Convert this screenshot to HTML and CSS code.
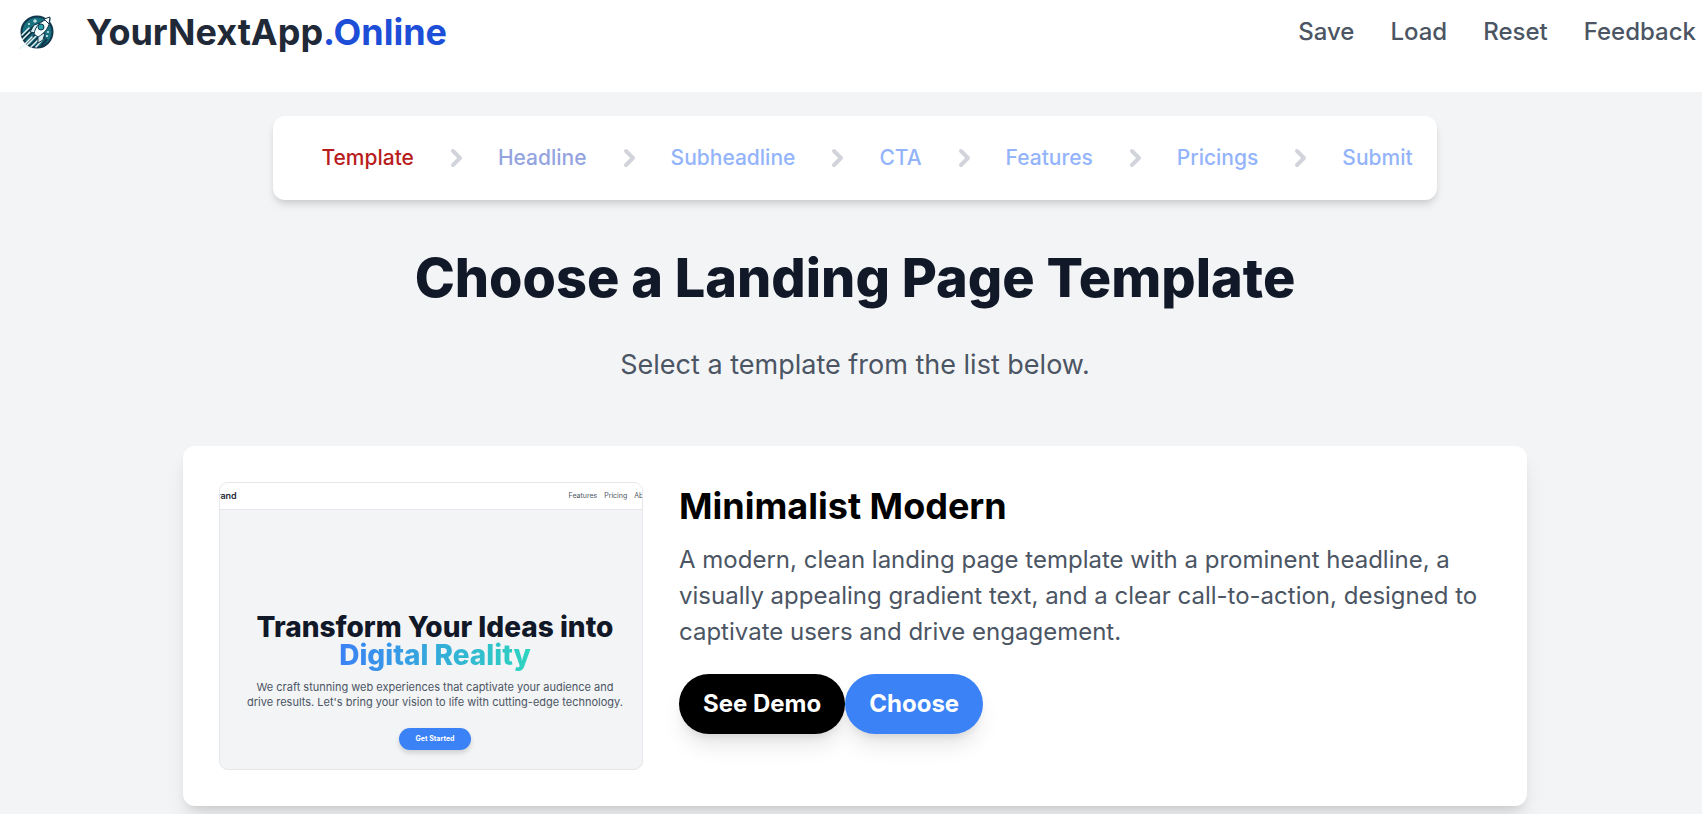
FILE: index.html
```
<!DOCTYPE html>
<html lang="en">
<head>
    <meta charset="UTF-8">
    <meta name="viewport" content="width=device-width, initial-scale=1.0">
    <title>YourNextApp.Online</title>
    <link rel="stylesheet" href="styles.css">
</head>
<body>
    <!-- Page Header -->
    <header class="header">
        <a href="#" class="brand">
            <svg class="logo" viewBox="0 0 36 36" aria-hidden="true">
                <circle cx="19" cy="18" r="15.5" fill="#17717f" stroke="#12374c" stroke-width="2"/>
                <path d="M4 23 15 13M6 26 18 15M9 29 20 18M13 31 24 20M18 32 27 23M23 32 29 25" stroke="#0f3448" stroke-width="2"/>
                <path d="M2 35 14 23M4 26 13 17M8 32 19 21M13 33 22 24M18 33 25 25M4 21 11 14" stroke="#e4f4f4" stroke-width="1.5" stroke-linecap="round"/>
                <path d="M12 18l4-7 6-2-4 10zM20 21l7-2-2 7-5 3z" fill="#d9eef0" stroke="#12374c"/>
                <path d="M16 20c1-7 6-13 16-16 0 9-5 15-12 19z" fill="#f3fbfb" stroke="#12374c"/>
                <path d="M26 5l6-2-1 7z" fill="#fff" stroke="#12374c"/>
                <circle cx="23" cy="13" r="3" fill="#2aa3ac" stroke="#12374c"/>
                <path d="M17 5v4M15 7h4" stroke="#fff"/>
                <circle cx="11" cy="10" r="1" fill="#d9eef0"/>
                <circle cx="30" cy="18" r="1" fill="#d9eef0"/>
                <circle cx="29" cy="22" r="1" fill="#d9eef0"/>
            </svg>
            <span class="brand-name">YourNextApp<span class="brand-tld">.Online</span></span>
        </a>
        <nav class="nav">
            <a href="#">Save</a>
            <a href="#">Load</a>
            <a href="#">Reset</a>
            <a href="#">Feedback</a>
        </nav>
    </header>

    <main class="main">
        <!-- Builder Steps -->
        <nav class="steps">
            <a href="#" class="step current">Template</a>
            <svg class="chevron" viewBox="0 0 36 36"><path d="M15 11l7 7-7 7"/></svg>
            <a href="#" class="step next">Headline</a>
            <svg class="chevron" viewBox="0 0 36 36"><path d="M15 11l7 7-7 7"/></svg>
            <a href="#" class="step">Subheadline</a>
            <svg class="chevron" viewBox="0 0 36 36"><path d="M15 11l7 7-7 7"/></svg>
            <a href="#" class="step">CTA</a>
            <svg class="chevron" viewBox="0 0 36 36"><path d="M15 11l7 7-7 7"/></svg>
            <a href="#" class="step">Features</a>
            <svg class="chevron" viewBox="0 0 36 36"><path d="M15 11l7 7-7 7"/></svg>
            <a href="#" class="step">Pricings</a>
            <svg class="chevron" viewBox="0 0 36 36"><path d="M15 11l7 7-7 7"/></svg>
            <a href="#" class="step">Submit</a>
        </nav>

        <h1>Choose a Landing Page Template</h1>
        <p class="subtitle">Select a template from the list below.</p>

        <!-- Template Card -->
        <section class="card">
            <div class="preview">
                <div class="preview-header">
                    <span class="preview-brand">Brand</span>
                    <div class="preview-nav">
                        <span>Features</span>
                        <span>Pricing</span>
                        <span>About</span>
                    </div>
                </div>
                <div class="preview-hero">
                    <div class="preview-title">Transform Your Ideas into<br><span class="gradient">Digital Reality</span></div>
                    <div class="preview-text">We craft stunning web experiences that captivate your audience and<br>drive results. Let's bring your vision to life with cutting-edge technology.</div>
                    <button type="button" class="preview-button">Get Started</button>
                </div>
            </div>
            <div class="details">
                <h2>Minimalist Modern</h2>
                <p>A modern, clean landing page template with a prominent headline, a visually appealing gradient text, and a clear call-to-action, designed to captivate users and drive engagement.</p>
                <div class="buttons">
                    <button type="button" class="button demo">See Demo</button>
                    <button type="button" class="button choose">Choose</button>
                </div>
            </div>
        </section>
    </main>
</body>
</html>
```
FILE: styles.css
```
* {
    box-sizing: border-box;
}

/* Main page styling */
body {
    margin: 0;
    font-family: Inter, sans-serif;
    font-size: 24px;
    line-height: 36px;
    color: #000;
    background-color: #f3f4f6;
}

a {
    text-decoration: none;
}

/* Header styling */
.header {
    display: flex;
    justify-content: space-between;
    align-items: flex-start;
    height: 92px;
    padding: 14px 6px 0 18px;
    background: white;
}

.brand {
    display: flex;
    align-items: center;
    gap: 32px;
}

.logo {
    width: 36px;
    height: 36px;
}

.brand-name {
    font-size: 36px;
    font-weight: 700;
    color: #1f2937;
}

.brand-tld {
    color: #1d4ed8;
}

.nav {
    display: flex;
    gap: 36px;
}

.nav a {
    color: #4b5563;
    font-weight: 500;
}

/* Content column */
.main {
    display: flex;
    flex-direction: column;
    align-items: center;
    padding: 24px 0 8px 8px;
}

/* Steps bar */
.steps {
    display: flex;
    align-items: center;
    gap: 24px;
    height: 84px;
    padding: 0 24px 0 48px;
    background: white;
    border-radius: 12px;
    box-shadow: 0 6px 9px -1px rgba(0,0,0,0.1), 0 3px 6px -2px rgba(0,0,0,0.1);
}

.step {
    font-size: 21px;
    font-weight: 500;
    color: #93b4fb;
}

.step.current {
    color: #b91c1c;
}

.step.next {
    color: #93a4df;
}

.chevron {
    width: 36px;
    height: 36px;
    fill: none;
    stroke: #d1d5db;
    stroke-width: 4;
    stroke-linecap: round;
    stroke-linejoin: round;
}

h1 {
    margin: 48px 0 36px;
    font-size: 54px;
    line-height: 60px;
    font-weight: 800;
    color: #111827;
}

.subtitle {
    margin: 0 0 60px;
    font-size: 27px;
    line-height: 42px;
    color: #4b5563;
}

/* Template card */
.card {
    display: flex;
    gap: 36px;
    width: 100%;
    max-width: 1344px;
    padding: 36px;
    background: white;
    border-radius: 12px;
    box-shadow: 0 15px 22px -4px rgba(0,0,0,0.1), 0 6px 9px -4px rgba(0,0,0,0.1);
}

.details {
    flex: 1;
}

.details h2 {
    margin: 0 0 12px;
    font-size: 36px;
    line-height: 48px;
    font-weight: 700;
}

.details p {
    margin: 0 0 24px;
    color: #4b5563;
}

.buttons {
    display: flex;
}

.button {
    height: 60px;
    padding: 0 24px;
    border: none;
    border-radius: 30px;
    font: 700 24px/36px Inter, sans-serif;
    color: white;
    cursor: pointer;
    box-shadow: 0 15px 22px -4px rgba(0,0,0,0.1), 0 6px 9px -4px rgba(0,0,0,0.1);
}

.demo {
    background-color: #000;
}

.choose {
    background-color: #3b82f6;
}

/* Small preview of the template, cropped at both sides */
.preview {
    flex: none;
    width: 424px;
    height: 288px;
    border: 1px solid #e5e7eb;
    border-radius: 9px;
    background: #f3f4f6;
    overflow: hidden;
}

.preview-header {
    display: flex;
    justify-content: space-between;
    align-items: center;
    height: 27px;
    margin: 0 -12px;
    padding: 0 0 0 3px;
    background: white;
    border-bottom: 1px solid #e5e7eb;
}

.preview-brand {
    font-size: 9px;
    font-weight: 600;
    color: #1f2937;
}

.preview-nav {
    display: flex;
    gap: 7px;
    font-size: 7px;
    color: #4b5563;
}

.preview-hero {
    display: flex;
    flex-direction: column;
    align-items: center;
    padding: 103px 0 0 8px;
    text-align: center;
    white-space: nowrap;
}

.preview-title {
    font-size: 28px;
    line-height: 28px;
    font-weight: 800;
    color: #111827;
}

.gradient {
    background: linear-gradient(to right, #3b82f6, #2dd4bf);
    background-clip: text;
    -webkit-background-clip: text;
    color: transparent;
}

.preview-text {
    margin: 11px 0 18px;
    font-size: 11px;
    line-height: 15px;
    color: #4b5563;
}

.preview-button {
    width: 72px;
    height: 22px;
    padding: 0;
    border: none;
    border-radius: 11px;
    font: 700 7px/12px Inter, sans-serif;
    color: white;
    background: #3b82f6;
    box-shadow: 0 3px 5px rgba(0,0,0,0.15);
}
```
